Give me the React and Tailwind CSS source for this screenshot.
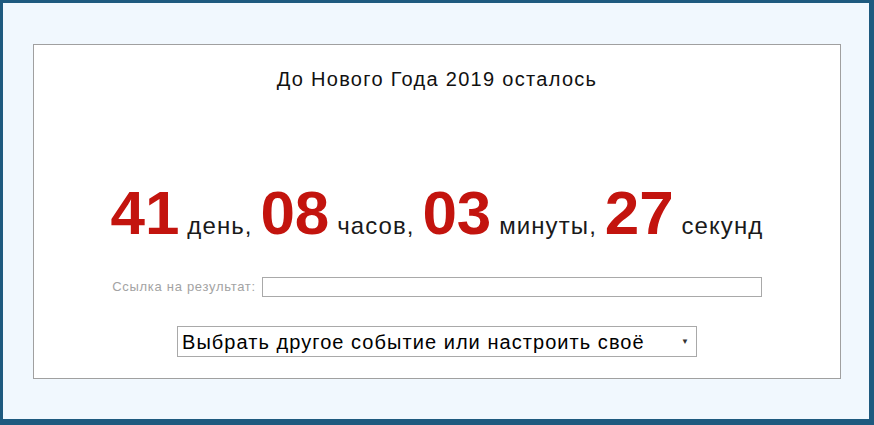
import React from "react";

const parts = [
  { num: "41", label: "день," },
  { num: "08", label: "часов," },
  { num: "03", label: "минуты," },
  { num: "27", label: "секунд" },
];

export default function App() {
  return (
    <div
      className="w-[874px] h-[425px] bg-[#f1f8fe] border-l-[3px] border-t-[3px] border-r-[5px] border-b-[6px] border-[#1e5a7f] pt-[41px] pl-[30px]"
      style={{ fontFamily: '"Liberation Sans", Arial, sans-serif' }}
    >
      <div className="w-[808px] h-[335px] bg-white border border-[#a0a0a0] flex flex-col items-center pt-[22px]">
        <h1 className="text-[20px] leading-[24px] tracking-[1.3px] text-[#111] font-normal">
          До Нового Года 2019 осталось
        </h1>

        <div className="mt-[91px] flex items-baseline whitespace-pre">
          {parts.map((p, i) => (
            <React.Fragment key={p.num}>
              <span className="text-[62px] leading-none font-bold text-[#c3140e]">
                {p.num}
              </span>
              <span className="text-[24px] leading-[24px] tracking-[1.1px] text-[#1a1a1a]">
                {" " + p.label + (i < parts.length - 1 ? " " : "")}
              </span>
            </React.Fragment>
          ))}
        </div>

        <div className="mt-[33px] flex items-center gap-[6px]">
          <label
            htmlFor="result-link"
            className="text-[13px] tracking-[0.7px] text-[#a3a3a3]"
          >
            Ссылка на результат:
          </label>
          <input
            id="result-link"
            type="text"
            className="w-[500px] h-[20px] border border-[#a9a9a9] bg-white outline-none"
          />
        </div>

        <div className="mt-[29px] w-[520px] h-[31px] border border-[#a9a9a9] bg-white flex items-center justify-between pl-[4px] pr-[7px]">
          <span className="text-[20px] tracking-[1.05px] text-black">
            Выбрать другое событие или настроить своё
          </span>
          <span className="text-[8px] text-[#333]">▼</span>
        </div>
      </div>
    </div>
  );
}
